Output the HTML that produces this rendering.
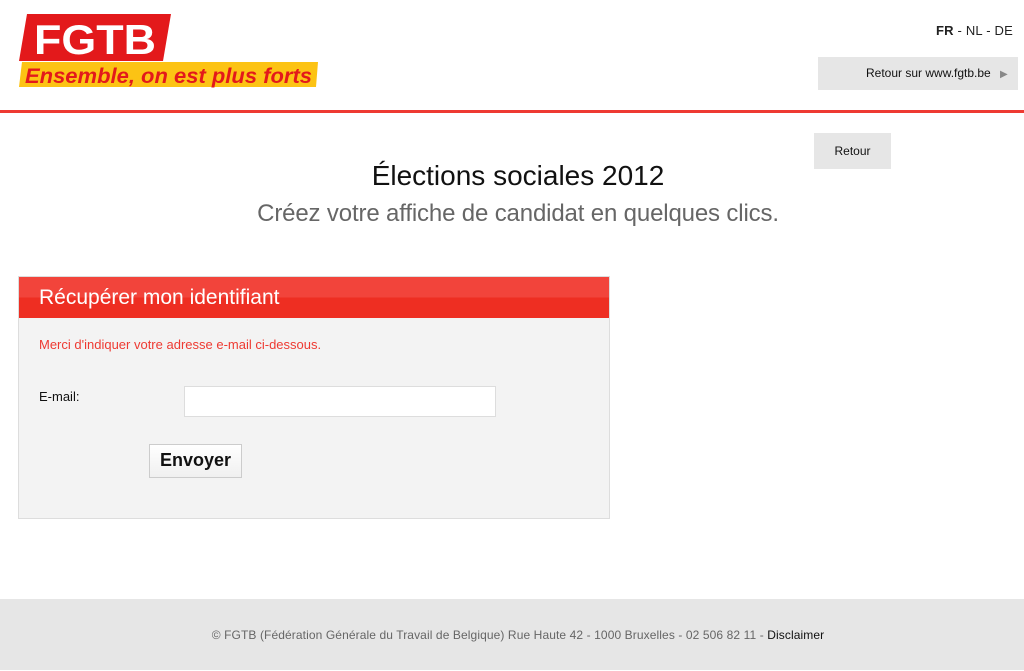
<!DOCTYPE html>
<html><head><meta charset="utf-8"><style>
*{margin:0;padding:0;box-sizing:border-box}
body{width:1024px;height:670px;background:#fff;font-family:"Liberation Sans",sans-serif;position:relative;overflow:hidden}
.abs{position:absolute}
</style></head><body>
<svg class="abs" style="left:0;top:0" width="330" height="95">
<polygon points="27,14 171,14 163,61 19,61" fill="#e3191b"/>
<text x="34" y="54" font-family="Liberation Sans" font-weight="bold" font-size="42" fill="#fff" textLength="122" lengthAdjust="spacingAndGlyphs">FGTB</text>
<polygon points="22,62 318,62 316,87 19,87" fill="#fcc314"/>
<text x="25" y="83" font-family="Liberation Sans" font-weight="bold" font-style="italic" font-size="21" fill="#e3191b" textLength="287" lengthAdjust="spacingAndGlyphs">Ensemble, on est plus forts</text>
</svg>
<div class="abs" style="right:11px;top:23px;font-size:13px;color:#222;letter-spacing:0.2px"><b>FR</b> - NL - DE</div>
<div class="abs" style="left:818px;top:57px;width:200px;height:33px;background:#e6e6e6;font-size:12px;line-height:33px;padding-left:48px;color:#111">Retour sur www.fgtb.be<span style="position:absolute;left:182px;top:1px;color:#888;font-size:10px">▶</span></div>
<div class="abs" style="left:0;top:110px;width:1024px;height:3px;background:#ee3a32"></div>
<div class="abs" style="left:814px;top:133px;width:77px;height:36px;background:#e6e6e6;font-size:12px;line-height:36px;text-align:center;color:#111">Retour</div>
<div class="abs" style="left:0;top:160px;width:1036px;text-align:center;font-size:28px;color:#111">Élections sociales 2012</div>
<div class="abs" style="left:0;top:200px;width:1036px;text-align:center;font-size:24px;color:#666;letter-spacing:-0.15px">Créez votre affiche de candidat en quelques clics.</div>
<div class="abs" style="left:18px;top:276px;width:592px;height:243px;background:#f3f3f3;border:1px solid #ddd"></div>
<div class="abs" style="left:19px;top:277px;width:590px;height:41px;background:linear-gradient(#f2443b 0,#f2443b 50%,#ee2e22 50%);color:#fff;font-size:21px;line-height:41px;padding-left:20px">Récupérer mon identifiant</div>
<div class="abs" style="left:39px;top:337px;font-size:13px;color:#ee3a32">Merci d'indiquer votre adresse e-mail ci-dessous.</div>
<div class="abs" style="left:39px;top:389px;font-size:13px;color:#111">E-mail:</div>
<div class="abs" style="left:184px;top:386px;width:312px;height:31px;background:#fff;border:1px solid #ddd"></div>
<div class="abs" style="left:149px;top:444px;width:93px;height:34px;background:linear-gradient(#fff,#f0f0f0);border:1px solid #ccc;font-size:18px;font-weight:bold;line-height:31px;text-align:center;color:#111">Envoyer</div>
<div class="abs" style="left:0;top:599px;width:1024px;height:71px;background:#e6e6e6;text-align:center;font-size:12px;line-height:72px;color:#666;letter-spacing:0.1px;padding-left:12px">© FGTB (Fédération Générale du Travail de Belgique) Rue Haute 42 - 1000 Bruxelles - 02 506 82 11 - <span style="color:#111">Disclaimer</span></div>
</body></html>
